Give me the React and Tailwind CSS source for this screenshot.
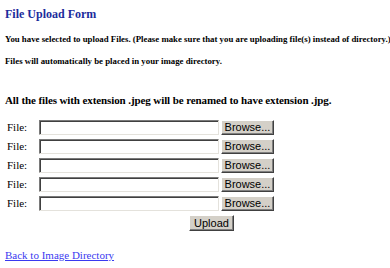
import React from 'react';

function FileRow() {
  return (
    <div className="flex items-center h-[19px]">
      <span className="w-[34px] pl-[2px] text-[11px] text-black font-['Liberation_Serif','Times_New_Roman',serif]">File:</span>
      <div className="w-[180px] h-[15px] bg-white border border-t-[#7a7a7a] border-l-[#7a7a7a] border-b-[#e4e2dc] border-r-[#e4e2dc] shadow-[inset_1px_1px_0_#404040]" />
      <button className="ml-[2px] w-[53px] h-[15px] bg-[#d4d0c8] border border-t-white border-l-white border-b-[#404040] border-r-[#404040] shadow-[inset_-1px_-1px_0_#808080] text-[11px] leading-none text-black font-['Liberation_Sans',Arial,sans-serif]">
        Browse...
      </button>
    </div>
  );
}

export default function App() {
  return (
    <div className="w-[390px] h-[268px] bg-white px-[5px] pt-[6px] font-['Liberation_Serif','Times_New_Roman',serif]">
      <h1 className="text-[12px] font-bold text-[#1c2c9c] leading-[16px]">File Upload Form</h1>

      <p className="mt-[12px] text-[8.8px] font-bold text-black leading-[10px] whitespace-nowrap">
        You have selected to upload Files. (Please make sure that you are uploading file(s) instead of directory.)
      </p>
      <p className="mt-[12px] text-[8.8px] font-bold text-black leading-[10px]">
        Files will automatically be placed in your image directory.
      </p>

      <p className="mt-[27px] text-[11px] tracking-[-0.1px] font-bold text-black leading-[14px]">
        All the files with extension .jpeg will be renamed to have extension .jpg.
      </p>

      <div className="mt-[11px] flex flex-col">
        <FileRow />
        <FileRow />
        <FileRow />
        <FileRow />
        <FileRow />
      </div>

      <div className="mt-[2px] flex">
        <button className="ml-[184px] w-[45px] h-[16px] bg-[#d4d0c8] border border-t-white border-l-white border-b-[#404040] border-r-[#404040] shadow-[inset_-1px_-1px_0_#808080] text-[11px] leading-none text-black font-['Liberation_Sans',Arial,sans-serif]">
          Upload
        </button>
      </div>

      <a href="#" className="block mt-[17px] w-fit text-[11px] text-[#3a3af0] underline leading-[14px]">
        Back to Image Directory
      </a>
    </div>
  );
}
